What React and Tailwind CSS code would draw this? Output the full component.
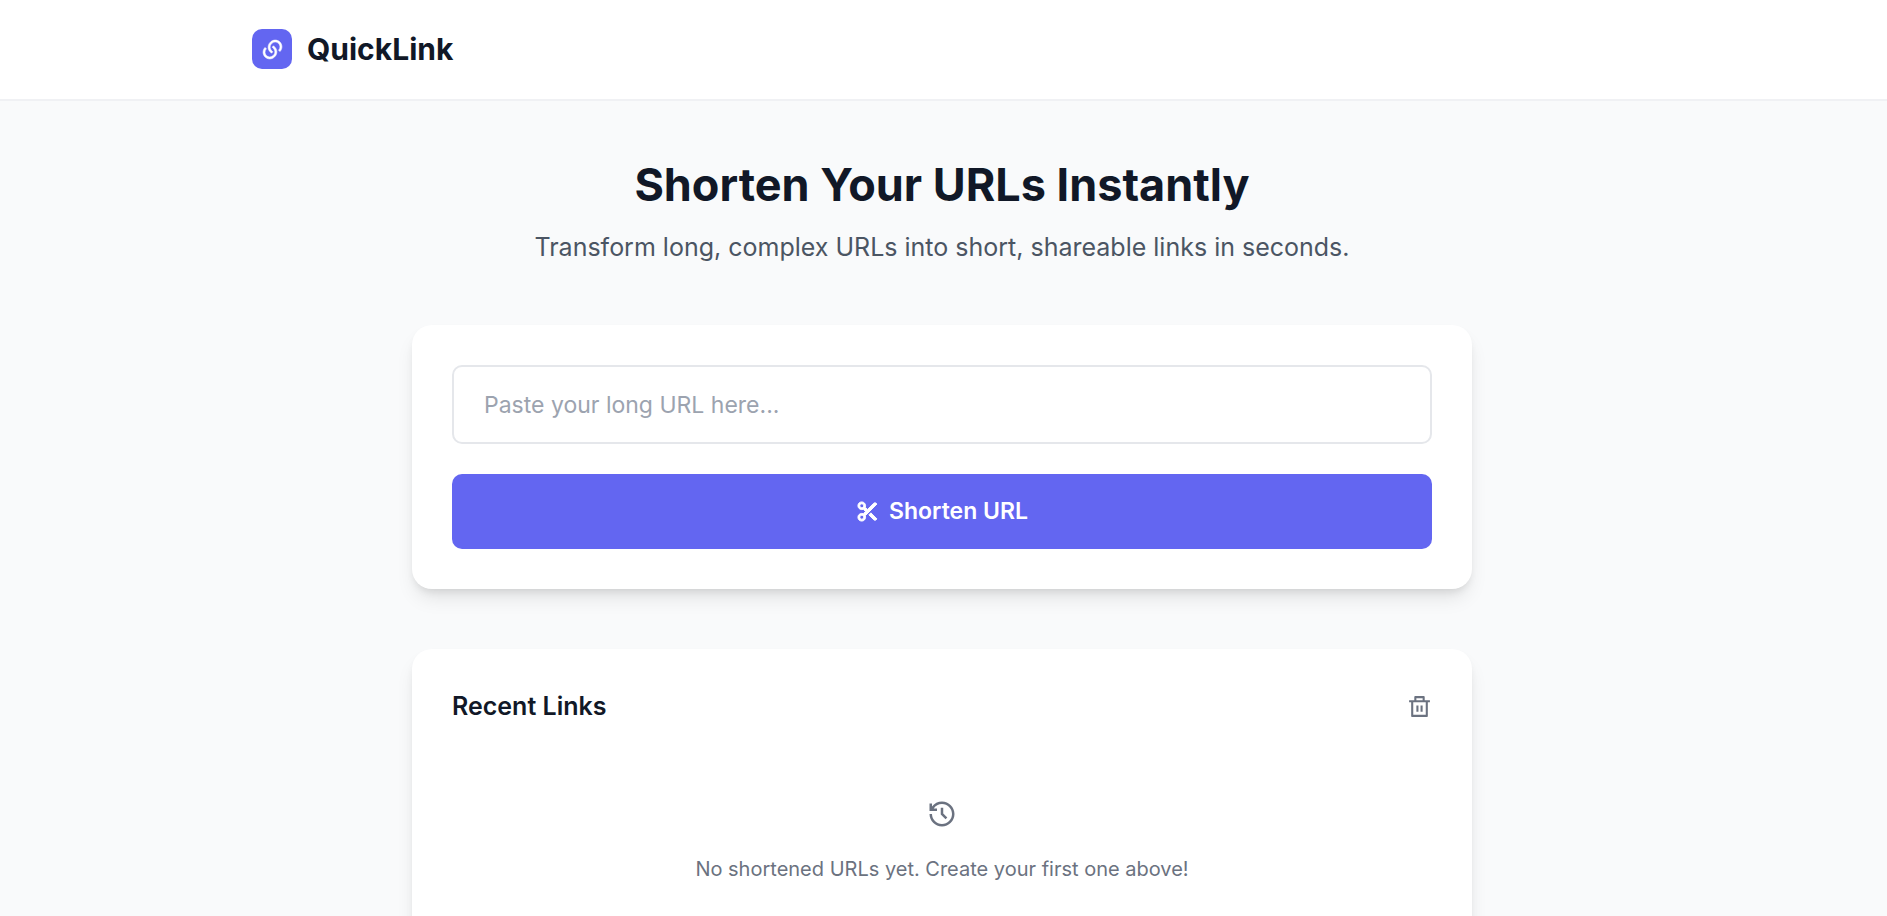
import { RiLinksLine, RiScissorsFill, RiDeleteBinLine, RiHistoryLine } from "react-icons/ri";

function Header() {
  return (
    <header className="border-b-2 border-[#f0f1f4] bg-white pt-[29px] pr-[3px] pb-[30px]">
      <div className="mx-auto flex max-w-[1380px] items-center gap-[15px]">
        <span className="flex size-10 items-center justify-center rounded-[10px] bg-[#6366f1] text-white">
          <RiLinksLine className="size-[23px] stroke-current stroke-[0.6]" aria-hidden="true" />
        </span>
        <span className="text-[30px] leading-10 font-bold">QuickLink</span>
      </div>
    </header>
  );
}

function Card({ children }) {
  return (
    <section className="rounded-[20px] bg-white p-10 shadow-[0_12px_20px_-4px_rgba(0,0,0,0.1),0_5px_8px_-3px_rgba(0,0,0,0.1)]">
      {children}
    </section>
  );
}

function ShortenForm() {
  return (
    <Card>
      <form className="flex flex-col gap-[30px]" onSubmit={(e) => e.preventDefault()}>
        <input
          type="url"
          aria-label="Long URL"
          placeholder="Paste your long URL here..."
          className="h-[79px] w-full rounded-[10px] border-2 border-[#e5e7eb] px-[30px] text-[23px] outline-none placeholder:text-[#9ca3af] focus:border-[#6366f1]"
        />
        <button
          type="submit"
          className="flex h-[75px] w-full items-center justify-center gap-[10px] rounded-[10px] bg-[#6366f1] text-[23px] font-semibold text-white"
        >
          <RiScissorsFill className="size-[23px] stroke-current stroke-1" aria-hidden="true" />
          Shorten URL
        </button>
      </form>
    </Card>
  );
}

function RecentLinks() {
  return (
    <Card>
      <div className="flex items-center justify-between">
        <h2 className="text-[25px] leading-[35px] font-semibold">Recent Links</h2>
        <button type="button" aria-label="Clear recent links" className="text-[#6b7280]">
          <RiDeleteBinLine className="size-[25px]" aria-hidden="true" />
        </button>
      </div>
      <div className="flex flex-col items-center gap-[25px] pt-[75px] pb-10 text-[#6b7280]">
        <RiHistoryLine className="size-[30px]" aria-hidden="true" />
        <p className="text-xl leading-[30px]">No shortened URLs yet. Create your first one above!</p>
      </div>
    </Card>
  );
}

export default function App() {
  return (
    <div className="min-h-screen bg-[#f9fafb] font-['Inter',sans-serif] text-[#111827]">
      <Header />
      <div className="pr-[3px]">
        <main className="mx-auto flex max-w-[1060px] flex-col gap-[60px] py-[59px]">
          <div className="flex flex-col items-center gap-5 text-center">
            <h1 className="text-[45px] leading-[50px] font-bold">Shorten Your URLs Instantly</h1>
            <p className="text-[25px] leading-[35px] text-[#4b5563]">
              Transform long, complex URLs into short, shareable links in seconds.
            </p>
          </div>
          <ShortenForm />
          <RecentLinks />
        </main>
      </div>
    </div>
  );
}
